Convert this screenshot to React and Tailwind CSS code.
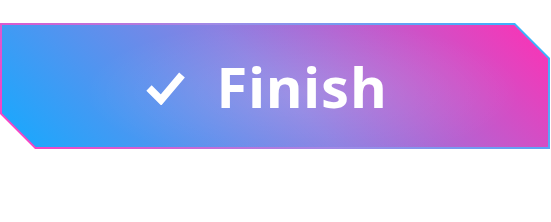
import React from 'react';

export default function App() {
  return (
    <div className="w-[551px] h-[222px] bg-white pt-[23px]">
      <button className="block w-[550px] h-[126px] p-[2px] bg-[linear-gradient(45deg,#ff3cc0,#a08ae6,#30b6ff)] [clip-path:polygon(0_0,515px_0,550px_35px,550px_126px,35px_126px,0_91px)]">
        <div className="relative w-full h-full bg-[linear-gradient(45deg,#14aaff,#8a80e2_50%,#ff30b4)] [clip-path:polygon(0_0,512.2px_0,546px_33.8px,546px_122px,33.8px_122px,0_88.2px)]">
          <div className="absolute inset-0 bg-[radial-gradient(ellipse_40%_60%_at_55%_55%,rgba(255,255,255,0.14),rgba(255,255,255,0))]" />
          <div className="relative flex h-full items-center justify-center gap-[31px] pr-[20px] text-white">
            <svg width="43" height="36" viewBox="0 0 43 36" className="mt-[1px]">
              <polyline points="7,19 19,31 40,6" fill="none" stroke="white" strokeWidth="7.5" />
            </svg>
            <span className="font-['Noto_Sans',sans-serif] text-[56px] font-bold leading-none tracking-[1px]">Finish</span>
          </div>
        </div>
      </button>
    </div>
  );
}
